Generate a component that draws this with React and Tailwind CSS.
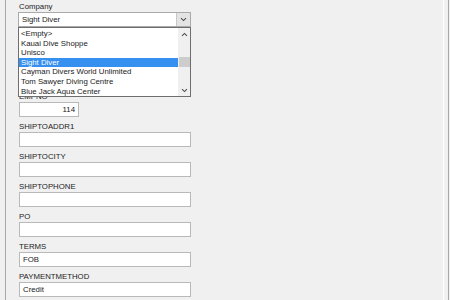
import { useState } from 'react';

// Company lookup options
const COMPANIES = [
  '<Empty>',
  'Kauai Dive Shoppe',
  'Unisco',
  'Sight Diver',
  'Cayman Divers World Unlimited',
  'Tom Sawyer Diving Centre',
  'Blue Jack Aqua Center',
];

const FIELDS = [
  { id: 'empno', label: 'EMPNO', value: '114', short: true },
  { id: 'addr', label: 'SHIPTOADDR1', value: '' },
  { id: 'city', label: 'SHIPTOCITY', value: '' },
  { id: 'phone', label: 'SHIPTOPHONE', value: '' },
  { id: 'po', label: 'PO', value: '' },
  { id: 'terms', label: 'TERMS', value: 'FOB' },
  { id: 'pay', label: 'PAYMENTMETHOD', value: 'Credit' },
];

const Chevron = ({ up = false }) => (
  <svg width="7" height="5" viewBox="0 0 7 5" className={up ? 'rotate-180' : ''}>
    <path d="M1 1.2 L3.5 3.6 L6 1.2" fill="none" stroke="#505050" strokeWidth="1.1" />
  </svg>
);

const Field = ({ label, value, short }) => (
  <div className="flex flex-col h-[30px]">
    <div className="h-[10px] leading-[10px] text-[7.8px] text-[#222]">{label}</div>
    <div
      className={`h-[15px] bg-white border border-[#b9b9b9] flex items-center px-[3px] text-[7.8px] text-[#1a1a1a] ${
        short ? 'w-[60px] justify-end' : 'w-[172px]'
      }`}
    >
      {value}
    </div>
  </div>
);

const App = () => {
  const [selected] = useState('Sight Diver');

  return (
    <div
      className="w-[450px] h-[300px] overflow-hidden bg-[#f0f0f0] flex"
      style={{ fontFamily: '"Liberation Sans", Arial, sans-serif' }}
    >
      {/* left frame edge */}
      <div className="w-[5px] shrink-0" />
      <div className="w-px shrink-0 bg-[#a8a8a8]" />

      <div className="relative flex-1 pl-[13px] pt-[2px]">
        {/* Company combo */}
        <div className="flex flex-col h-[30px]">
          <div className="h-[10px] leading-[10px] text-[7.8px] text-[#222]">Company</div>
          <div className="relative -ml-px w-[173px] h-[15px] bg-white border border-[#a9a9a9] flex items-center">
            <span className="pl-[3px] text-[7.8px] text-[#1a1a1a] flex-1">{selected}</span>
            <div className="w-[14px] h-full bg-[#e4e4e4] border-l border-[#c8c8c8] flex items-center justify-center">
              <Chevron />
            </div>
          </div>
        </div>

        {/* fields covered by the open list */}
        <div className="h-[60px]" />

        {FIELDS.map((f) => (
          <Field key={f.id} {...f} />
        ))}

        {/* open dropdown list */}
        <div className="absolute left-[12px] top-[27px] w-[173px] h-[70px] bg-white border border-[#6e6e6e] flex z-10">
          <div className="flex-1 pt-px">
            {COMPANIES.map((c) => (
              <div
                key={c}
                className={`h-[9.6px] leading-[9.6px] text-[7.8px] pl-[2px] ${
                  c === selected ? 'bg-[#3590f0] text-white' : 'text-[#1a1a1a]'
                }`}
              >
                {c}
              </div>
            ))}
          </div>
          <div className="w-[12px] bg-[#f0f0f0] flex flex-col items-center">
            <div className="h-[12px] flex items-center justify-center">
              <Chevron up />
            </div>
            <div className="mt-[17px] w-[11px] h-[10px] bg-[#cdcdcd]" />
            <div className="flex-1" />
            <div className="h-[12px] flex items-center justify-center">
              <Chevron />
            </div>
          </div>
        </div>
      </div>

      {/* right frame edge */}
      <div className="w-px shrink-0 bg-white" />
      <div className="w-[4px] shrink-0" />
      <div className="w-px shrink-0 bg-[#a8a8a8]" />
      <div className="w-px shrink-0" />
    </div>
  );
};

export default App;
